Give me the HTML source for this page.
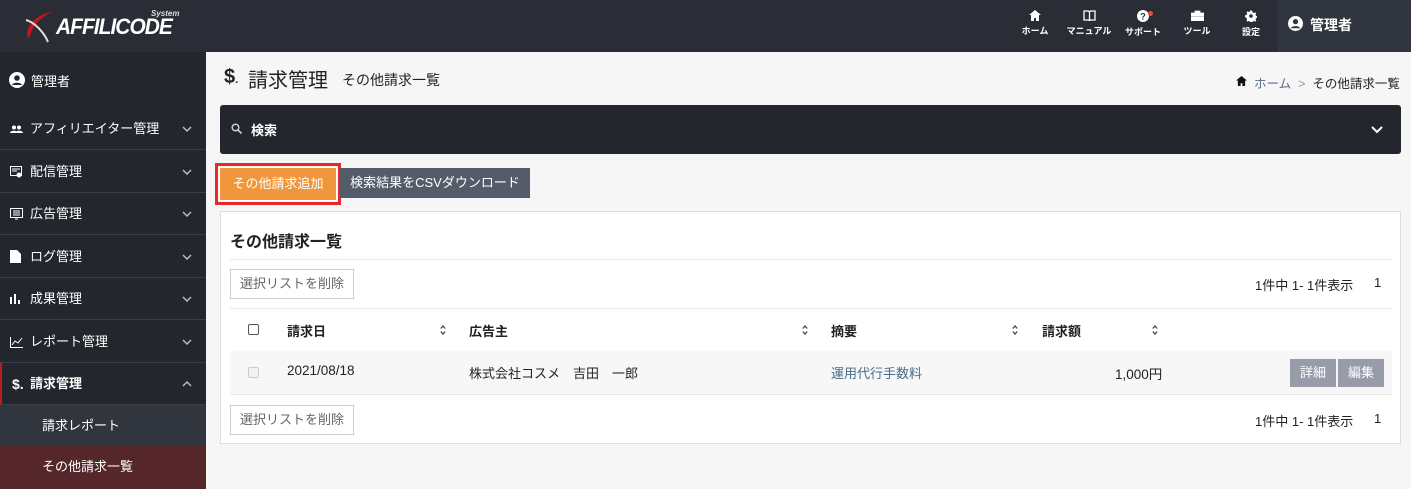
<!DOCTYPE html>
<html><head><meta charset="utf-8">
<style>
*{box-sizing:border-box;margin:0;padding:0}
body{width:1411px;height:489px;overflow:hidden;background:#f6f6f6;font-family:"Liberation Sans","Noto Sans CJK JP",sans-serif;font-size:13px;color:#333;position:relative}
.a{position:absolute}
.hdr{left:0;top:0;width:1411px;height:52px;background:#2a2d36}
.nav{top:10px;width:56px;text-align:center;color:#fff;font-size:9px;font-weight:bold}
.nav svg{display:block;margin:0 auto 3px}
.side{left:0;top:52px;width:206px;height:437px;background:#23262d}
.it{left:0;width:206px;height:42px;border-bottom:1px solid #3a3d45;color:#fff;font-size:13px;line-height:42px;padding-left:30px}
.it .ic{position:absolute;left:10px;top:0}
.it .ch{position:absolute;right:14px;top:18px}
.sub{left:0;width:206px;height:42px;color:#fff;font-size:13px;line-height:42px;padding-left:42px}
.card{left:220px;top:211px;width:1181px;height:233px;background:#fff;border:1px solid #ddd}
.btn{border:1px solid #ccc;background:#fff;color:#666;font-size:13px;height:30px;line-height:28px;padding:0 9px}
.th{font-weight:bold;font-size:13px;color:#222}
.sort{width:6px;height:12px}
.cb{width:11px;height:11px;border:1px solid #555;border-radius:2px;background:#fff}
.gb{background:#979ca8;color:#fff;font-size:13px;height:28px;line-height:28px;padding:0 10px}
.pg{font-size:13px;color:#222}
</style></head><body>
<div class="a hdr"></div>
<svg class="a" style="left:22px;top:8px" width="36" height="36" viewBox="0 0 36 36"><path d="M6 30 C2 20 14 6 30 4 C20 8 10 18 8 28Z" fill="#c4161c"/><path d="M4 12 C12 14 22 24 26 34" stroke="#ddd" stroke-width="2" fill="none"/></svg>
<div class="a" style="left:56px;top:14px;color:#fff;font-size:22px;font-style:italic;font-weight:bold;letter-spacing:-1px;transform:scaleX(0.95);transform-origin:left">AFFILICODE</div>
<div class="a" style="left:151px;top:9px;color:#ddd;font-size:8px;font-style:italic;font-weight:bold">System</div>
<div class="a nav" style="left:1007px"><svg width="12" height="11" viewBox="0 0 12 11"><path d="M6 0L0 5h2v6h3V8h2v3h3V5h2z" fill="#fff"/></svg>ホーム</div>
<div class="a nav" style="left:1061px"><svg width="13" height="11" viewBox="0 0 13 11"><path d="M1 1h4.5l1 1 1-1H12v9H7.5l-1 1-1-1H1z M6.5 2v8" stroke="#fff" stroke-width="1.3" fill="none"/></svg>マニュアル</div>
<div class="a nav" style="left:1115px"><svg width="12" height="12" viewBox="0 0 12 12"><circle cx="6" cy="6" r="6" fill="#fff"/><text x="6" y="9.5" font-size="9" font-weight="bold" text-anchor="middle" fill="#2a2d36">?</text></svg>サポート</div>
<div class="a" style="left:1148px;top:11px;width:5px;height:5px;border-radius:50%;background:#e74c3c"></div>
<div class="a nav" style="left:1169px"><svg width="13" height="11" viewBox="0 0 13 11"><path d="M4 3V1h5v2M0 3h13v3H0z M0 7h13v4H0z" fill="#fff" stroke="#fff" stroke-width="0.8"/></svg>ツール</div>
<div class="a nav" style="left:1223px"><svg width="12" height="12" viewBox="0 0 12 12"><path d="M6 0.5l1.2.3.3 1.5 1.3.7 1.4-.6.9.9-.6 1.4.7 1.3 1.5.3v1.4l-1.5.3-.7 1.3.6 1.4-.9.9-1.4-.6-1.3.7-.3 1.5H5.4l-.3-1.5-1.3-.7-1.4.6-.9-.9.6-1.4-.7-1.3L0 6.7V5.3l1.5-.3.7-1.3-.6-1.4.9-.9 1.4.6 1.3-.7.3-1.5z" fill="#fff"/><circle cx="6" cy="6" r="1.8" fill="#2a2d36"/></svg>設定</div>
<div class="a" style="left:1278px;top:0;width:133px;height:52px;background:#31353e"></div>
<svg class="a" style="left:1288px;top:16px" width="15" height="15" viewBox="0 0 16 16"><circle cx="8" cy="8" r="8" fill="#fff"/><circle cx="8" cy="6" r="2.8" fill="#31353e"/><path d="M3 13c1-3 9-3 10 0" fill="#31353e"/></svg>
<div class="a" style="left:1310px;top:15px;color:#fff;font-size:14px;font-weight:bold">管理者</div>

<div class="a side"></div>
<svg class="a" style="left:9px;top:72px" width="16" height="16" viewBox="0 0 16 16"><circle cx="8" cy="8" r="8" fill="#fff"/><circle cx="8" cy="6" r="2.8" fill="#23262d"/><path d="M3 13c1-3 9-3 10 0" fill="#23262d"/></svg>
<div class="a" style="left:31px;top:71px;color:#fff;font-size:13px">管理者</div>

<div class="a it" style="top:108px"><span class="ic"><svg width="13" height="9" style="margin-top:17px" viewBox="0 0 13 9"><circle cx="4" cy="2.5" r="2" fill="#fff"/><circle cx="9" cy="2.5" r="2" fill="#fff"/><path d="M0 8c0-3 8-3 8 0z M5 8c0-3 8-3 8 0z" fill="#fff"/></svg></span>アフィリエイター管理<svg class="ch" width="10" height="6" viewBox="0 0 10 6"><path d="M1 1l4 4 4-4" stroke="#bbb" stroke-width="1.5" fill="none"/></svg></div>
<div class="a it" style="top:151px"><span class="ic"><svg width="12" height="12" style="margin-top:15px" viewBox="0 0 12 12"><rect x="0.5" y="0.5" width="11" height="9" fill="none" stroke="#fff"/><path d="M2 3h8M2 5h5" stroke="#fff"/><circle cx="9" cy="9" r="2.5" fill="#fff"/></svg></span>配信管理<svg class="ch" width="10" height="6" viewBox="0 0 10 6"><path d="M1 1l4 4 4-4" stroke="#bbb" stroke-width="1.5" fill="none"/></svg></div>
<div class="a it" style="top:193px"><span class="ic"><svg width="13" height="12" style="margin-top:15px" viewBox="0 0 13 12"><rect x="0.5" y="0.5" width="12" height="9" fill="none" stroke="#fff"/><path d="M3 3h7M3 5h7M3 7h7M5 11h3" stroke="#fff"/></svg></span>広告管理<svg class="ch" width="10" height="6" viewBox="0 0 10 6"><path d="M1 1l4 4 4-4" stroke="#bbb" stroke-width="1.5" fill="none"/></svg></div>
<div class="a it" style="top:236px"><span class="ic"><svg width="11" height="13" style="margin-top:14px" viewBox="0 0 11 13"><path d="M0 0h7l4 4v9H0z" fill="#fff"/></svg></span>ログ管理<svg class="ch" width="10" height="6" viewBox="0 0 10 6"><path d="M1 1l4 4 4-4" stroke="#bbb" stroke-width="1.5" fill="none"/></svg></div>
<div class="a it" style="top:278px"><span class="ic"><svg width="11" height="10" style="margin-top:16px" viewBox="0 0 11 10"><path d="M1 3v7M5 0v10M9 6v4" stroke="#fff" stroke-width="2"/></svg></span>成果管理<svg class="ch" width="10" height="6" viewBox="0 0 10 6"><path d="M1 1l4 4 4-4" stroke="#bbb" stroke-width="1.5" fill="none"/></svg></div>
<div class="a it" style="top:321px"><span class="ic"><svg width="13" height="11" style="margin-top:16px" viewBox="0 0 13 11"><path d="M0.5 0v10.5H13 M2 8l3-4 3 2 4-5" stroke="#fff" fill="none"/></svg></span>レポート管理<svg class="ch" width="10" height="6" viewBox="0 0 10 6"><path d="M1 1l4 4 4-4" stroke="#bbb" stroke-width="1.5" fill="none"/></svg></div>
<div class="a it" style="top:363px;border-left:2px solid #b91c22;padding-left:28px;font-weight:bold"><span class="ic" style="font-weight:bold;font-size:14px">$.</span>請求管理<svg class="ch" width="10" height="6" viewBox="0 0 10 6"><path d="M1 5l4-4 4 4" stroke="#bbb" stroke-width="1.5" fill="none"/></svg></div>
<div class="a sub" style="top:405px;background:#31353e">請求レポート</div>
<div class="a sub" style="top:446px;height:43px;background:#55262a">その他請求一覧</div>

<div class="a" style="left:224px;top:66px;font-size:20px;font-weight:bold;color:#222">$<span style="font-size:11px">.</span></div>
<div class="a" style="left:248px;top:64px;font-size:20px;color:#222">請求管理</div>
<div class="a" style="left:342px;top:70px;font-size:14px;color:#222">その他請求一覧</div>
<svg class="a" style="left:1236px;top:76px" width="11" height="10" viewBox="0 0 12 11"><path d="M6 0L0 5h2v6h3V8h2v3h3V5h2z" fill="#111"/></svg>
<div class="a" style="left:1254px;top:73px;font-size:12.5px;color:#5a6c84">ホーム <span style="color:#999">&nbsp;&gt;</span> <span style="color:#222">&nbsp;その他請求一覧</span></div>

<div class="a" style="left:220px;top:105px;width:1181px;height:49px;background:#23262d;border-radius:3px"></div>
<svg class="a" style="left:231px;top:123px" width="11" height="11" viewBox="0 0 11 11"><circle cx="4.5" cy="4.5" r="3.3" stroke="#ccc" stroke-width="1.5" fill="none"/><path d="M7 7l3.5 3.5" stroke="#ccc" stroke-width="1.7"/></svg>
<div class="a" style="left:251px;top:120px;color:#fff;font-weight:bold;font-size:13px">検索</div>
<svg class="a" style="left:1371px;top:126px" width="12" height="8" viewBox="0 0 12 8"><path d="M1 1l5 5 5-5" stroke="#fff" stroke-width="2" fill="none"/></svg>

<div class="a" style="left:215px;top:163px;width:126px;height:42px;border:3px solid #e8262c"></div>
<div class="a" style="left:219px;top:167px;width:118px;height:34px;background:#f0963c;border:1px solid #fff;color:#fff;font-size:13px;line-height:32px;text-align:center">その他請求追加</div>
<div class="a" style="left:340px;top:168px;width:190px;height:30px;background:#545b69;color:#fff;font-size:13px;line-height:30px;text-align:center">検索結果をCSVダウンロード</div>

<div class="a card"></div>
<div class="a" style="left:230px;top:228px;font-size:16px;font-weight:bold;color:#222">その他請求一覧</div>
<div class="a" style="left:230px;top:259px;width:1162px;height:1px;background:#e8e8e8"></div>
<div class="a btn" style="left:230px;top:269px">選択リストを削除</div>
<div class="a pg" style="left:1255px;top:275px">1件中 1- 1件表示</div>
<div class="a pg" style="left:1374px;top:275px">1</div>
<div class="a" style="left:230px;top:308px;width:1162px;height:1px;background:#e8e8e8"></div>
<div class="a cb" style="left:248px;top:324px"></div>
<div class="a th" style="left:287px;top:321px">請求日</div>
<div class="a th" style="left:469px;top:321px">広告主</div>
<div class="a th" style="left:831px;top:321px">摘要</div>
<div class="a th" style="left:1042px;top:321px">請求額</div>
<svg class="a sort" style="left:440px;top:324px" viewBox="0 0 6 12"><path d="M0.8 4.5L3 2l2.2 2.5M0.8 7.5L3 10l2.2-2.5" stroke="#444" stroke-width="1.3" fill="none"/></svg>
<svg class="a sort" style="left:802px;top:324px" viewBox="0 0 6 12"><path d="M0.8 4.5L3 2l2.2 2.5M0.8 7.5L3 10l2.2-2.5" stroke="#444" stroke-width="1.3" fill="none"/></svg>
<svg class="a sort" style="left:1012px;top:324px" viewBox="0 0 6 12"><path d="M0.8 4.5L3 2l2.2 2.5M0.8 7.5L3 10l2.2-2.5" stroke="#444" stroke-width="1.3" fill="none"/></svg>
<svg class="a sort" style="left:1152px;top:324px" viewBox="0 0 6 12"><path d="M0.8 4.5L3 2l2.2 2.5M0.8 7.5L3 10l2.2-2.5" stroke="#444" stroke-width="1.3" fill="none"/></svg>
<div class="a" style="left:230px;top:351px;width:1162px;height:44px;background:#f7f7f7;border-bottom:1px solid #e8e8e8"></div>
<div class="a cb" style="left:248px;top:367px;border-color:#ccc;background:#f2f2f2"></div>
<div class="a" style="left:287px;top:363px;font-size:13.5px;color:#222">2021/08/18</div>
<div class="a" style="left:469px;top:363px;font-size:13px;color:#222">株式会社コスメ　吉田　一郎</div>
<div class="a" style="left:831px;top:363px;font-size:13px;color:#4a6a8c">運用代行手数料</div>
<div class="a" style="left:1115px;top:363px;font-size:13.5px;color:#222">1,000円</div>
<div class="a gb" style="left:1290px;top:359px">詳細</div>
<div class="a gb" style="left:1338px;top:359px">編集</div>
<div class="a btn" style="left:230px;top:405px">選択リストを削除</div>
<div class="a pg" style="left:1255px;top:411px">1件中 1- 1件表示</div>
<div class="a pg" style="left:1374px;top:411px">1</div>
</body></html>
